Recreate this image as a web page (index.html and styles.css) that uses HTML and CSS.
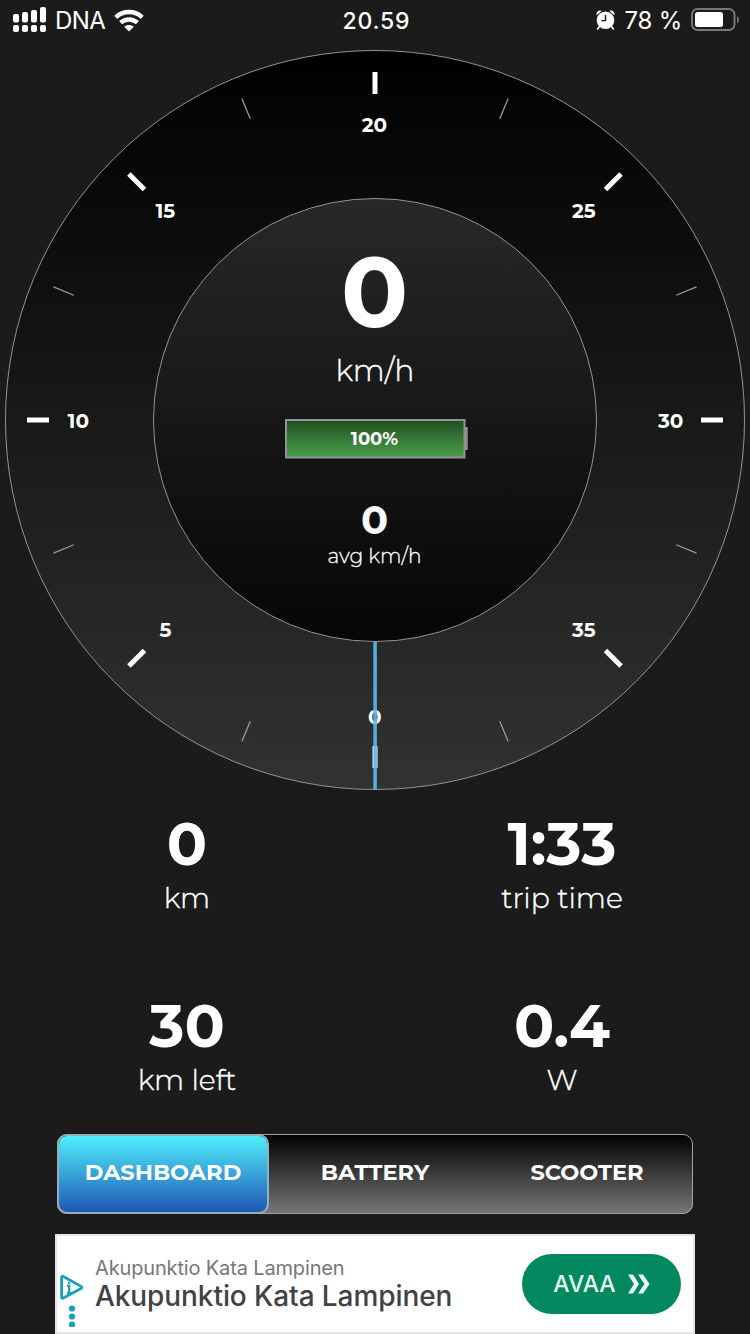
FILE: index.html
```html
<!DOCTYPE html>
<html lang="fi">
<head>
<meta charset="utf-8">
<title>Scooter dashboard</title>
<link rel="stylesheet" href="styles.css">
</head>
<body>
<div class="screen">
  <header class="status">
    <div class="status-left">
      <svg class="signal" width="34" height="26" viewBox="0 0 34 26" fill="#fff">
        <rect x="0" y="7" width="6" height="8.500" rx="2"/><rect x="9" y="5" width="6" height="10.500" rx="2"/><rect x="18" y="3" width="6" height="12.500" rx="2"/><rect x="27" y="0" width="6" height="15.500" rx="2"/>
        <rect x="0" y="18" width="6" height="7" rx="2"/><rect x="9" y="18" width="6" height="7" rx="2"/><rect x="18" y="18" width="6" height="7" rx="2"/><rect x="27" y="18" width="6" height="7" rx="2"/>
      </svg>
      <span class="carrier">DNA</span>
      <svg class="wifi" width="30" height="23" viewBox="0 0 30 23">
        <g fill="none" stroke="#fff" stroke-width="4.400"><path d="M1.800 8.300C9 1.300 21 1.300 28.200 8.300"/><path d="M6.600 13.700c4.800-4.300 12-4.300 16.800 0"/></g>
        <path d="M10.200 17.800c2.800-2.500 6.800-2.500 9.600 0L15 22.600z" fill="#fff"/>
      </svg>
    </div>
    <span class="clock">20.59</span>
    <div class="status-right">
      <svg class="alarm" width="19" height="20" viewBox="0 0 19 20">
        <g fill="#fff"><path d="M.6 5.200C-.2 2.200 2.800-.3 5.600.9z"/><path d="M18.400 5.200c.8-3-2.200-5.500-5-4.300z"/><circle cx="9.500" cy="10.300" r="8.800"/></g>
        <path d="M3.500 16.500L1.600 19M15.500 16.500l1.900 2.500" stroke="#fff" stroke-width="1.600" stroke-linecap="round"/>
        <path d="M9.500 5v5.600H5.300" fill="none" stroke="#1b1b1b" stroke-width="1.400"/>
      </svg>
      <span class="percent">78 %</span>
      <svg class="phone-battery" width="49" height="24" viewBox="0 0 49 24">
        <rect x="1" y="1" width="42.500" height="21" rx="5.500" fill="none" stroke="#777" stroke-width="2"/>
        <rect x="4" y="4" width="28" height="15" rx="2.500" fill="#fff"/>
        <path d="M46 8.200c2.600.8 2.600 6.300 0 7.100z" fill="#777"/>
      </svg>
    </div>
  </header>

  <svg class="gauge" width="750" height="750" viewBox="0 40 750 750">
    <defs>
      <linearGradient id="ring" x1="0" y1="0" x2="0" y2="1"><stop offset="0" stop-color="#000"/><stop offset="1" stop-color="#323232"/></linearGradient>
      <linearGradient id="hub" x1="0" y1="0" x2="0" y2="1"><stop offset="0" stop-color="#282828"/><stop offset="1" stop-color="#060606"/></linearGradient>
      <linearGradient id="charge" x1="0" y1="0" x2="0" y2="1"><stop offset="0" stop-color="#215022"/><stop offset="1" stop-color="#499e4a"/></linearGradient>
    </defs>
    <circle cx="375" cy="420" r="369.500" fill="url(#ring)" stroke="#939393"/>
    <g transform="translate(375 420)">
      <g stroke="#fff" stroke-width="5">
        <path id="tick" d="M0-348V-326"/>
        <use href="#tick" transform="rotate(45)"/><use href="#tick" transform="rotate(90)"/><use href="#tick" transform="rotate(135)"/><use href="#tick" transform="rotate(180)"/><use href="#tick" transform="rotate(225)"/><use href="#tick" transform="rotate(270)"/><use href="#tick" transform="rotate(315)"/>
      </g>
      <g stroke="#999" stroke-width="1.300">
        <path id="minor" d="M0-348V-326" transform="rotate(22.500)"/>
        <use href="#minor" transform="rotate(45)"/><use href="#minor" transform="rotate(90)"/><use href="#minor" transform="rotate(135)"/><use href="#minor" transform="rotate(180)"/><use href="#minor" transform="rotate(225)"/><use href="#minor" transform="rotate(270)"/><use href="#minor" transform="rotate(315)"/>
      </g>
    </g>
    <g class="scale">
      <text x="374.500" y="132">20</text>
      <text x="583.800" y="218">25</text>
      <text x="670.700" y="428">30</text>
      <text x="583.800" y="637">35</text>
      <text x="374.700" y="724">0</text>
      <text x="165.500" y="637">5</text>
      <text x="78.300" y="428">10</text>
      <text x="165.300" y="218">15</text>
    </g>
    <circle cx="375" cy="420" r="221.500" fill="url(#hub)" stroke="#939393"/>
    <rect x="373.300" y="642" width="3.600" height="148" fill="#5ab6f0" fill-opacity=".92"/>
    <text class="speed" x="374.500" y="327">0</text>
    <text class="unit" x="375" y="381">km/h</text>
    <rect x="286" y="420" width="178.500" height="37.500" fill="url(#charge)" stroke="#929292" stroke-width="2"/>
    <rect x="465" y="427" width="2.700" height="23" fill="#929292"/>
    <text class="charge" x="374.500" y="445">100%</text>
    <text class="average" x="374.500" y="534">0</text>
    <text class="average-unit" x="374.500" y="563">avg km/h</text>
  </svg>

  <main class="stats">
    <div class="stat"><span class="value">0</span><span class="label">km</span></div>
    <div class="stat"><span class="value">1:33</span><span class="label">trip time</span></div>
    <div class="stat"><span class="value">30</span><span class="label">km left</span></div>
    <div class="stat"><span class="value">0.4</span><span class="label">W</span></div>
  </main>

  <nav class="tabs">
    <div class="tab active"><span>DASHBOARD</span></div>
    <div class="tab"><span>BATTERY</span></div>
    <div class="tab"><span>SCOOTER</span></div>
  </nav>

  <aside class="ad">
    <div class="ad-marks">
      <svg width="24" height="52" viewBox="0 0 24 52">
        <path d="M1.600 2.500v19.500Q1.600 23.800 3.300 23L21 13.600Q22.600 12.500 21 11.400L3.300 1.500Q1.600 .7 1.600 2.500z" fill="none" stroke="#17a2b8" stroke-width="2.800" stroke-linejoin="round"/>
        <path d="M9 7v2.300M7 10.800H9.200v7M7 17.800h4" fill="none" stroke="#17a2b8" stroke-width="2.200"/>
        <g fill="#17a2b8"><circle cx="12" cy="33.500" r="3.100"/><circle cx="12" cy="41.500" r="3.100"/><circle cx="12" cy="49.500" r="3.100"/></g>
      </svg>
    </div>
    <div class="ad-copy"><span class="ad-small">Akupunktio Kata Lampinen</span><span class="ad-title">Akupunktio Kata Lampinen</span></div>
    <div class="ad-button"><span>AVAA</span>
      <svg width="22" height="20" viewBox="0 0 22 20"><path d="M0 .5h5l6 9.500-6 9.500H0L6 10zM10 .5h5L21.500 10 15 19.500h-5L16.500 10z" fill="#e9fff5"/></svg>
    </div>
  </aside>
</div>
</body>
</html>
```
FILE: styles.css
```css
* { box-sizing: border-box; }
body { margin: 0; background: #1b1b1b; color: #fff; font-family: Montserrat, Inter, sans-serif; }
.screen { width: 750px; height: 1334px; overflow: hidden; display: flex; flex-direction: column; }
svg { display: block; flex: none; }

.status { height: 40px; flex: none; display: grid; grid-template-columns: 1fr auto 1fr; padding: 0 10px 0 13px; align-items: center; font-family: Inter, sans-serif; font-size: 24px; line-height: 40px; }
.status span { padding-top: 1px; }
.status-left, .status-right { display: flex; align-items: center; }
.status-left { gap: 8px; }
.status-right { justify-content: flex-end; gap: 9px; }
.status svg { margin-bottom: 1px; }
.carrier { letter-spacing: -0.6px; margin-right: 1px; }
.clock { font-weight: 550; font-size: 23px; letter-spacing: .8px; }
.percent { font-size: 24px; letter-spacing: -0.2px; }

.gauge { width: 750px; height: 750px; }
.gauge text { fill: #fff; text-anchor: middle; }
.scale text { font-size: 20px; font-weight: 700; }
.speed { font-size: 99px; font-weight: 700; }
.gauge .unit { font-size: 30px; font-weight: 300; stroke: #fff; stroke-width: .4px; }
.charge { font-size: 18px; font-weight: 700; }
.average { font-size: 40px; font-weight: 700; }
.gauge .average-unit { font-size: 20.2px; font-weight: 300; stroke: #fff; stroke-width: .3px; }

.stats { height: 344px; flex: none; display: grid; grid-template-columns: 374px 376px; grid-template-rows: 182px 162px; padding-top: 22px; }
.stat { display: flex; flex-direction: column; align-items: center; }
.value { font-size: 59.5px; line-height: 64px; font-weight: 700; }
.label { font-size: 28.3px; line-height: 44px; font-weight: 300; -webkit-text-stroke: .4px #fff; }

.tabs { height: 80px; flex: none; margin: 0 57px; display: grid; grid-template-columns: 212px 212px 212px; border-radius: 10px; background: linear-gradient(#000, #777); position: relative; }
.tabs::after { content: ""; position: absolute; inset: 0; border: 1.5px solid #a4a4a4; border-radius: 10px; }
.tab { display: flex; align-items: center; justify-content: center; padding-bottom: 5px; font-size: 22.5px; font-weight: 700; }
.active { border: 2px solid #8fb3c6; border-radius: 10px; background: linear-gradient(#50eefc, #2058b4) padding-box; padding-bottom: 5px; }

.ad { width: 640px; height: 100px; flex: none; margin: 20px 0 0 55px; background: #fff; color: #424242; border: 2px solid #e4e4e4; display: flex; font-family: "Google Sans", Inter, sans-serif; }
.ad-marks { padding: 39px 0 0 3px; width: 38px; }
.ad-copy { display: flex; flex-direction: column; padding-top: 20px; width: 427px; white-space: nowrap; }
.ad-small { font-size: 20px; line-height: 24px; letter-spacing: -0.15px; color: #777; }
.ad-title { font-size: 28px; line-height: 32px; letter-spacing: -0.08px; font-weight: 500; }
.ad-button { width: 159px; height: 60px; margin-top: 18px; border-radius: 30px; background: #04885f; color: #e9fff5; display: flex; align-items: center; justify-content: center; gap: 12px; font-size: 23px; font-weight: 500; }
```
